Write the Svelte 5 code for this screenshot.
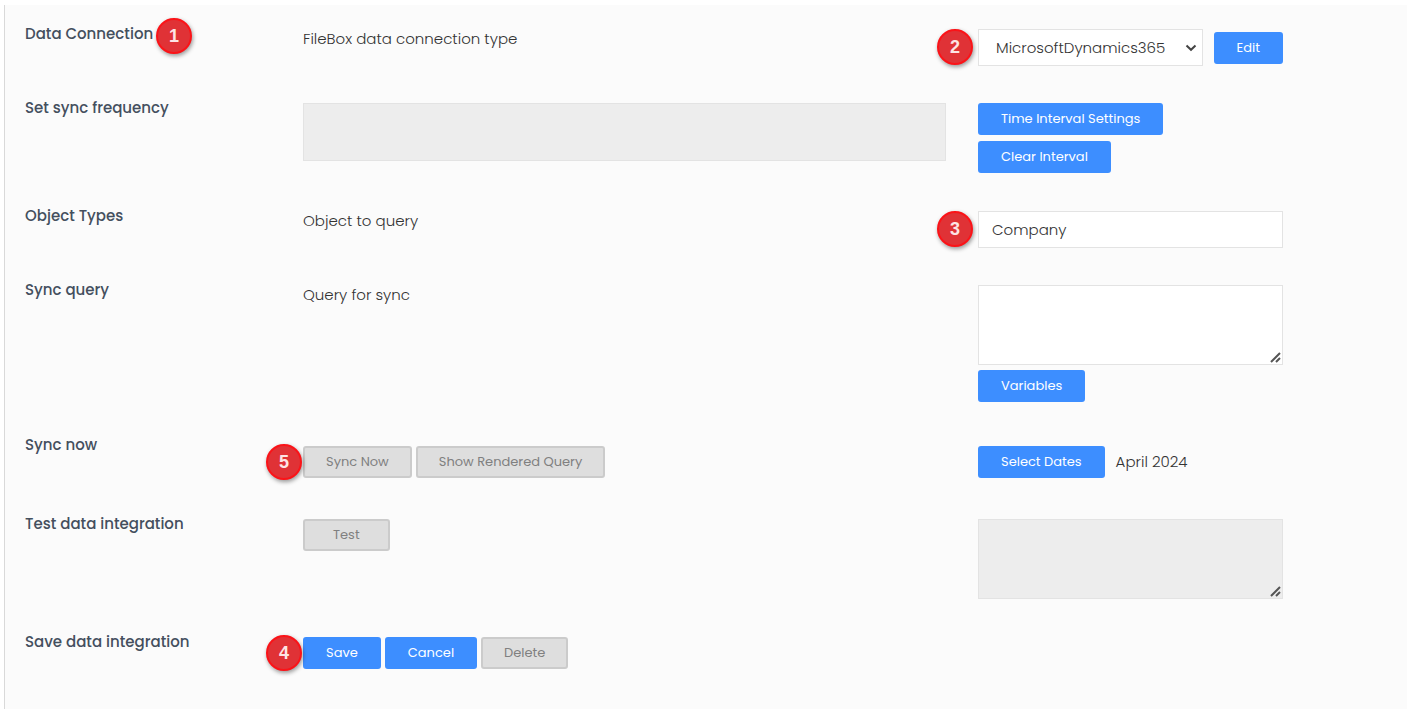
<script>
  let connection = $state('MicrosoftDynamics365');
  let objectType = $state('Company');
  let query = $state('');
  let interval = $state('');
  let result = $state('');
</script>

{#snippet badge(number)}
  <span class="badge">{number}</span>
{/snippet}

<form class="panel" onsubmit={(e) => e.preventDefault()}>
  <div class="row">
    <div class="name with-badge">
      <label for="connection">Data Connection</label>
      {@render badge(1)}
    </div>
    <p class="info">FileBox data connection type</p>
    <div class="field inline">
      {@render badge(2)}
      <div class="select">
        <select id="connection" bind:value={connection}>
          <option>MicrosoftDynamics365</option>
        </select>
        <svg width="12" height="8" viewBox="0 0 12 8" aria-hidden="true">
          <path d="M1.5 1.5L6 5.8L10.5 1.5" fill="none" stroke="#444" stroke-width="2" />
        </svg>
      </div>
      <button type="button" class="btn">Edit</button>
    </div>
  </div>

  <div class="row">
    <label class="name" for="interval">Set sync frequency</label>
    <div class="middle">
      <input id="interval" class="interval" type="text" bind:value={interval} disabled />
    </div>
    <div class="field stack">
      <button type="button" class="btn">Time Interval Settings</button>
      <button type="button" class="btn">Clear Interval</button>
    </div>
  </div>

  <div class="row">
    <label class="name" for="object-type">Object Types</label>
    <p class="info">Object to query</p>
    <div class="field">
      {@render badge(3)}
      <input id="object-type" type="text" bind:value={objectType} />
    </div>
  </div>

  <div class="row">
    <label class="name" for="query">Sync query</label>
    <p class="info">Query for sync</p>
    <div class="field stack">
      <textarea id="query" bind:value={query}></textarea>
      <button type="button" class="btn">Variables</button>
    </div>
  </div>

  <div class="row sync">
    <span class="name">Sync now</span>
    <div class="middle buttons">
      {@render badge(5)}
      <button type="button" class="btn" disabled>Sync Now</button>
      <button type="button" class="btn" disabled>Show Rendered Query</button>
    </div>
    <div class="field inline">
      <button type="button" class="btn">Select Dates</button>
      <span>April 2024</span>
    </div>
  </div>

  <div class="row">
    <label class="name" for="result">Test data integration</label>
    <div class="middle buttons">
      <button type="button" class="btn test" disabled>Test</button>
    </div>
    <div class="field stack">
      <textarea id="result" bind:value={result} disabled></textarea>
    </div>
  </div>

  <div class="row">
    <span class="name">Save data integration</span>
    <div class="middle buttons">
      {@render badge(4)}
      <button type="submit" class="btn">Save</button>
      <button type="button" class="btn">Cancel</button>
      <button type="button" class="btn" disabled>Delete</button>
    </div>
  </div>
</form>

<style>
  :global(body) {
    background: #fff;
  }

  .panel {
    box-sizing: border-box;
    display: flex;
    flex-direction: column;
    gap: 31px;
    min-height: calc(100vh - 5px);
    margin: 5px 0 0 4px;
    padding: 18px 124px 32px 20px;
    border-left: 1px solid #d9d9d9;
    background: #fbfbfb;
    color: #333;
    font-family: Poppins, Inter, sans-serif;
    font-size: 15px;
    font-weight: 300;
    line-height: 20px;
  }

  .row {
    display: grid;
    grid-template-columns: 278fr 675fr 305fr;
    align-items: start;
  }

  .name {
    color: #444f5e;
    font-weight: 500;
    line-height: 22px;
  }

  .with-badge {
    position: relative;
  }

  .info {
    margin: 6px 0 0;
  }

  .middle,
  .field {
    position: relative;
    margin-top: 6px;
  }

  .middle {
    margin-right: 32px;
  }

  .inline {
    display: flex;
    align-items: center;
    gap: 11px;
  }

  .buttons {
    display: flex;
    gap: 4px;
  }

  .stack {
    display: flex;
    flex-direction: column;
    align-items: flex-start;
    gap: 5px;
    padding-bottom: 1px;
  }

  .stack .btn + .btn {
    margin-top: 1px;
  }

  .sync .middle,
  .sync .field {
    margin-top: 12px;
    margin-bottom: 4px;
  }

  input,
  select,
  textarea {
    box-sizing: border-box;
    display: block;
    width: 100%;
    margin: 0;
    border: 1px solid #e3e3e3;
    border-radius: 0;
    background: #fff;
    color: #333;
    font: inherit;
  }

  input,
  select {
    height: 37px;
    padding: 0 13px;
  }

  .select {
    position: relative;
    flex: 1;
    min-width: 0;
  }

  .select svg {
    position: absolute;
    top: 15px;
    right: 6px;
    pointer-events: none;
  }

  select {
    padding: 0 30px 0 17px;
    appearance: none;
  }

  textarea {
    height: 80px;
    padding: 8px 13px;
  }

  textarea::-webkit-resizer {
    background: url("data:image/svg+xml,%3Csvg xmlns='http://www.w3.org/2000/svg' width='15' height='15'%3E%3Cpath d='M4 13 13 4M9 13l4-4' stroke='%23555' stroke-width='2'/%3E%3C/svg%3E") no-repeat right bottom;
  }

  .interval {
    height: 58px;
  }

  input:disabled,
  textarea:disabled {
    background: #ededed;
  }

  .btn {
    box-sizing: border-box;
    height: 32px;
    padding: 0 21px;
    border: 2px solid #3d8eff;
    border-radius: 3px;
    background: #3d8eff;
    color: #fff;
    font: inherit;
    font-size: 13px;
    font-weight: 400;
    white-space: nowrap;
    cursor: pointer;
  }

  .btn:disabled {
    border-color: #cbcbcb;
    background: #dedede;
    color: #808080;
    cursor: default;
  }

  .btn.test {
    padding: 0 28px;
  }

  .badge {
    position: absolute;
    top: 0;
    left: -41px;
    z-index: 1;
    box-sizing: border-box;
    width: 36px;
    height: 36px;
    border: 2px solid #fb1318;
    border-radius: 50%;
    background: #e03236;
    box-shadow: 1px 2px 4px rgba(0, 0, 0, 0.4);
    color: #fde4e4;
    font-family: "Liberation Sans", Arial, sans-serif;
    font-size: 18px;
    font-weight: 700;
    line-height: 32px;
    text-align: center;
  }

  .with-badge .badge {
    top: -5px;
    left: 131px;
  }

  .buttons .badge {
    top: -2px;
    left: -37px;
  }
</style>
